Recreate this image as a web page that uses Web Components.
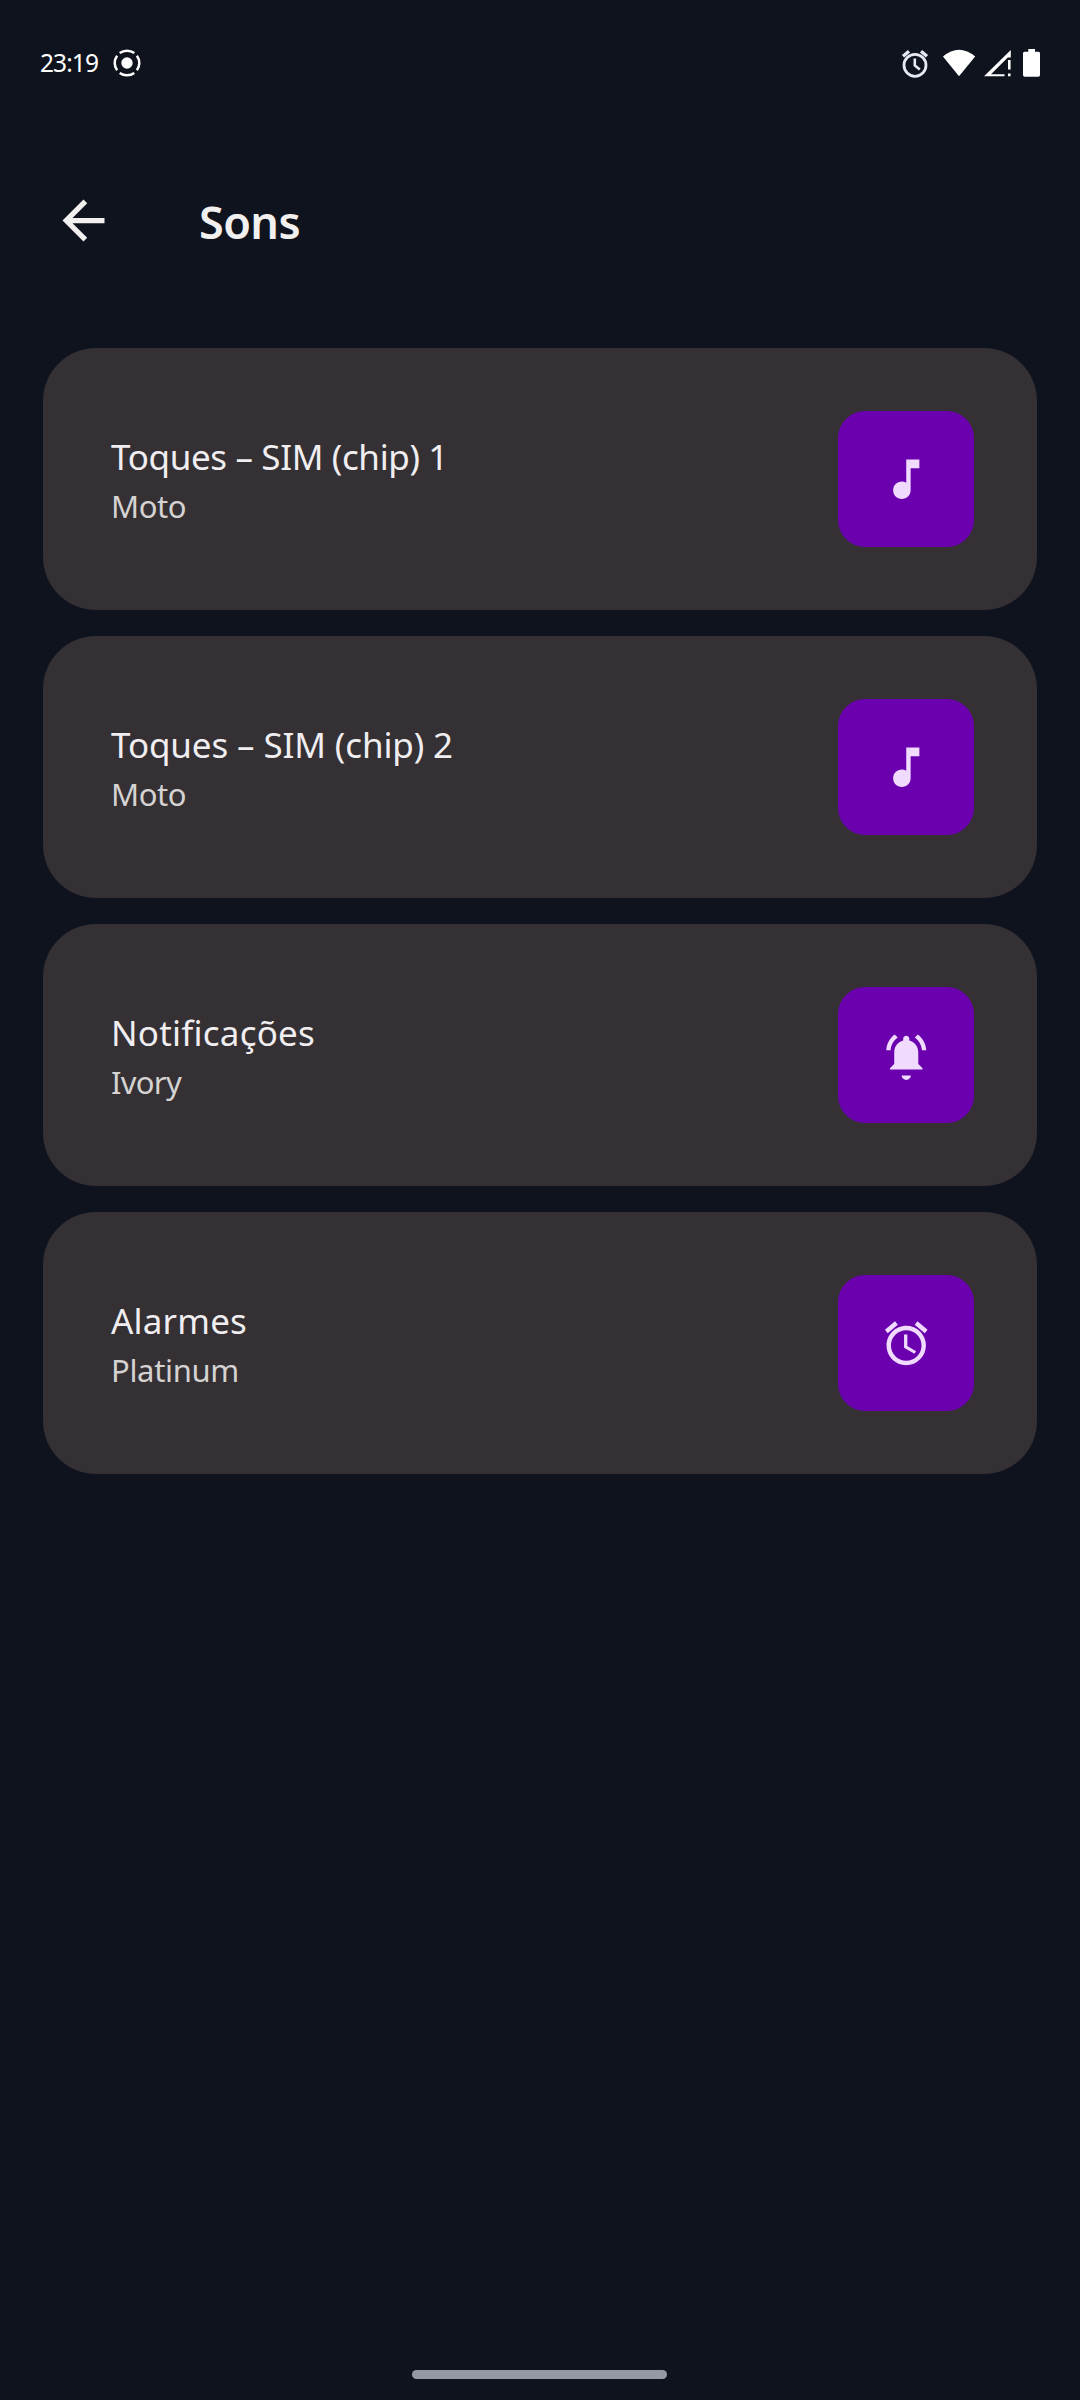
<!DOCTYPE html>
<html lang="pt-BR">
<head>
<meta charset="utf-8">
<title>Sons</title>
<style>
html,body{margin:0;background:#0f131e}
body{font-family:"Noto Sans","Open Sans",sans-serif}
</style>
</head>
<body>
<sound-screen></sound-screen>
<script>
const define=(name,html,setup)=>customElements.define(name,class extends HTMLElement{
  connectedCallback(){
    if(this.shadowRoot)return;
    const t=document.createElement('template');
    t.innerHTML=html;
    this.attachShadow({mode:'open'}).append(t.content.cloneNode(true));
    if(setup)setup(this,this.shadowRoot);
  }
});

const icons={
  note:'<path d="M12 3v10.55c-.59-.34-1.27-.55-2-.55-2.21 0-4 1.79-4 4s1.79 4 4 4 4-1.79 4-4V7h4V3z"/>',
  bell:'<path d="M6.7 2.5 8.1 3.9C6.2 5.3 5 7.3 4.85 9.7h-2C3 6.800 4.400 4.200 6.700 2.500zM17.300 2.500 15.900 3.900C17.800 5.300 19 7.300 19.150 9.700h2C21 6.800 19.600 4.200 17.300 2.500z"/><path d="M12 3.100c-.8 0-1.400.6-1.400 1.400v.7C8 5.900 6.500 8 6.500 10.800v5.200l-1.950 1.900v.6h14.900v-.6L17.500 16v-5.200c0-2.800-1.500-4.900-4.100-5.600v-.7c0-.8-.6-1.400-1.400-1.400zM9.900 21.300h4.200c0 1.100-.95 2-2.100 2s-2.100-.9-2.100-2z"/>',
  alarm:'<path d="M21.75 5.850l-4.600-3.860-1.290 1.530 4.600 3.860zM8.140 3.520 6.850 1.990 2.250 5.850l1.290 1.530zM12.500 8H11v6l4.750 2.850.75-1.230-4-2.370V8zM12 4c-4.970 0-9 4.030-9 9s4.020 9 9 9a9 9 0 0 0 0-18zm0 16c-3.870 0-7-3.130-7-7s3.130-7 7-7 7 3.130 7 7-3.130 7-7 7z"/>',
  back:'<path d="M20 11H7.83l5.59-5.59L12 4l-8 8 8 8 1.410-1.410L7.830 13H20z"/>'
};
define('ui-icon','<style>:host{display:block;width:52.5px;height:52.5px}svg{display:block;width:100%;height:100%;fill:currentColor}</style><svg viewBox="0 0 24 24" aria-hidden="true"></svg>',
  (h,r)=>{r.querySelector('svg').innerHTML=icons[h.getAttribute('name')]});

/* One line of text whose tracking is adjusted to fill a given width. */
define('fit-text','<style>:host{display:block;white-space:nowrap}span{display:inline-block;font-variant-ligatures:none}</style><span></span>',
  (h,r)=>{
    const s=r.querySelector('span');
    s.textContent=h.getAttribute('text');
    const w=+h.getAttribute('width');
    s.style.letterSpacing=(w-s.getBoundingClientRect().width)/s.textContent.length+'px';
  });

define('status-bar',`<style>
:host{display:flex;height:126px;box-sizing:border-box;padding:0 40px;align-items:center;color:#fff}
fit-text{font:400 24.5px/34px "Noto Sans",sans-serif}
svg{display:block;flex:none}
.rec{margin-left:15px}.right{display:flex;margin-left:auto}
</style>
<fit-text text="23:19" width="58"></fit-text>
<svg class="rec" width="28" height="28" viewBox="-14 -14 28 28"><circle r="5.7" fill="#fff"/><path fill="none" stroke="#fff" stroke-width="2.5" d="M-7.3-9.9A12.3 12.3 0 0 1 7.3-9.9M9.9-7.3A12.3 12.3 0 0 1 9.9 7.3M7.3 9.9A12.3 12.3 0 0 1-7.3 9.9M-9.9 7.3A12.3 12.3 0 0 1-9.9-7.3"/></svg>
<div class="right"><svg width="139" height="30" viewBox="901 47 139 30">
<g fill="none" stroke="#e8e9f0"><circle cx="915" cy="64.3" r="11" stroke-width="2.8"/><path stroke-width="2.6" d="M914.8 57.5v7l5 4"/><path stroke-width="3.4" d="M903 55.200l6-5M927 55.200l-6-5"/></g>
<g fill="#fff"><path d="M943 55.500Q959 42 975.200 55.500L959 75.200z"/><path fill-rule="evenodd" d="M1010.800 49v7.500h-3L991 73.200h13.500v2H984zM1008 59h2.600v9.500h-2.600zM1008 72.500h2.600v2.700h-2.600z"/><path d="M1028.300 48h6.700v2.700h3.500q1.500 0 1.500 1.500V74q0 1.700-1.700 1.700h-13.600q-1.700 0-1.700-1.700V52.200q0-1.500 1.500-1.500h3.800z"/></g>
</svg></div>`);

define('app-header',`<style>
:host{display:flex;align-items:center;height:190px;box-sizing:border-box;padding:0 52px 1px;color:#f1f0ef}
ui-icon{width:63px;height:63px}
fit-text{margin-left:84px;padding-top:2px;font:600 45px/64px "Noto Sans",sans-serif}
</style><ui-icon name="back"></ui-icon><fit-text text="Sons" width="101"></fit-text>`);

const rows=[
  ['Toques – SIM (chip) 1',337,'Moto',75,'note'],
  ['Toques – SIM (chip) 2',342,'Moto',75,'note'],
  ['Notificações',204,'Ivory',70,'bell'],
  ['Alarmes',136,'Platinum',128,'alarm']
];
customElements.define('sound-row',class extends HTMLElement{
  connectedCallback(){
    const [t,tw,s,sw,i]=rows[+this.getAttribute('index')];
    this.attachShadow({mode:'open'}).innerHTML=`<style>
:host{display:flex;align-items:center;justify-content:space-between;height:262px;box-sizing:border-box;padding:0 63px 0 68px;border-radius:53px;background:#343034}
.labels{padding-top:4px}
.title{font-size:35px;line-height:49px;color:#f0eef0}
.sub{font-size:31px;line-height:50px;color:#d5d2d2}
.tile{display:flex;align-items:center;justify-content:center;width:136px;height:136px;border-radius:27px;background:#6a00ae;color:#f0dbff}
</style><div class="labels"><fit-text class="title" text="${t}" width="${tw}"></fit-text><fit-text class="sub" text="${s}" width="${sw}"></fit-text></div><div class="tile"><ui-icon name="${i}"></ui-icon></div>`;
  }
});

define('sound-screen',`<style>
:host{display:flex;flex-direction:column;height:2400px;background:#0f131e;overflow:hidden}
main{display:flex;flex-direction:column;gap:26px;padding:32px 43px 0;flex:1}
.handle{width:255px;height:9px;border-radius:5px;background:#9699a3;margin:0 0 21px 412px}
</style><status-bar></status-bar><app-header></app-header>
<main><sound-row index="0"></sound-row><sound-row index="1"></sound-row><sound-row index="2"></sound-row><sound-row index="3"></sound-row></main>
<div class="handle"></div>`);
</script>
</body>
</html>
